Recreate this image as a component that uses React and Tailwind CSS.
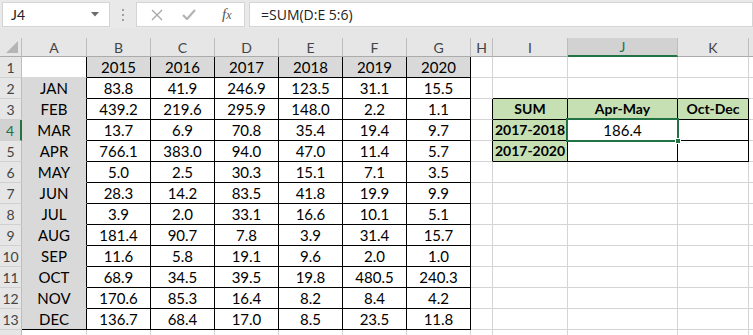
import React from 'react';

const COLS = [
  { key: 'A', w: 'w-[65px]' },
  { key: 'B', w: 'w-[64px]' },
  { key: 'C', w: 'w-[64px]' },
  { key: 'D', w: 'w-[64px]' },
  { key: 'E', w: 'w-[64px]' },
  { key: 'F', w: 'w-[64px]' },
  { key: 'G', w: 'w-[64px]' },
  { key: 'H', w: 'w-[22px]' },
  { key: 'I', w: 'w-[75px]' },
  { key: 'J', w: 'w-[110px]' },
  { key: 'K', w: 'w-[71px]' },
  { key: 'L', w: 'w-[64px]' },
];

const YEARS = ['2015', '2016', '2017', '2018', '2019', '2020'];

const DATA = [
  ['JAN', '83.8', '41.9', '246.9', '123.5', '31.1', '15.5'],
  ['FEB', '439.2', '219.6', '295.9', '148.0', '2.2', '1.1'],
  ['MAR', '13.7', '6.9', '70.8', '35.4', '19.4', '9.7'],
  ['APR', '766.1', '383.0', '94.0', '47.0', '11.4', '5.7'],
  ['MAY', '5.0', '2.5', '30.3', '15.1', '7.1', '3.5'],
  ['JUN', '28.3', '14.2', '83.5', '41.8', '19.9', '9.9'],
  ['JUL', '3.9', '2.0', '33.1', '16.6', '10.1', '5.1'],
  ['AUG', '181.4', '90.7', '7.8', '3.9', '31.4', '15.7'],
  ['SEP', '11.6', '5.8', '19.1', '9.6', '2.0', '1.0'],
  ['OCT', '68.9', '34.5', '39.5', '19.8', '480.5', '240.3'],
  ['NOV', '170.6', '85.3', '16.4', '8.2', '8.4', '4.2'],
  ['DEC', '136.7', '68.4', '17.0', '8.5', '23.5', '11.8'],
];

const SUMMARY = {
  '3-8': 'SUM',
  '3-9': 'Apr-May',
  '3-10': 'Oct-Dec',
  '4-8': '2017-2018',
  '4-9': '186.4',
  '5-8': '2017-2020',
};

const FILL = { gray: 'bg-[#d9d9d9]', green: 'bg-[#c6e0b4]', none: 'bg-white' };
const RIGHT = {
  black: 'border-r-black',
  gray: 'border-r-[#d9d9d9]',
  green: 'border-r-[#c6e0b4]',
  grid: 'border-r-[#d4d4d4]',
};
const BOTTOM = {
  black: 'border-b-black',
  gray: 'border-b-[#d9d9d9]',
  green: 'border-b-[#c6e0b4]',
  grid: 'border-b-[#d4d4d4]',
};

const bordered = (r, c) =>
  (r >= 1 && r <= 13 && c >= 1 && c <= 6) || (r >= 3 && r <= 5 && c >= 8 && c <= 10);

const fillOf = (r, c) => {
  if (r === 1 && c >= 1 && c <= 6) return 'gray';
  if (r >= 2 && r <= 13 && c === 0) return 'gray';
  if ((r === 3 && c >= 8 && c <= 10) || ((r === 4 || r === 5) && c === 8)) return 'green';
  return 'none';
};

const textOf = (r, c) => {
  if (r === 1 && c >= 1 && c <= 6) return YEARS[c - 1];
  if (r >= 2 && r <= 13 && c <= 6) return DATA[r - 2][c];
  return SUMMARY[`${r}-${c}`] || '';
};

// colour of the shared edge between two cells
const edge = (ar, ac, br, bc) => {
  if (bordered(ar, ac) || bordered(br, bc)) return 'black';
  const f = fillOf(ar, ac) !== 'none' ? fillOf(ar, ac) : fillOf(br, bc);
  return f === 'none' ? 'grid' : f;
};

const Cell = ({ r, c }) => {
  const right = edge(r, c, r, c + 1);
  const bottom = r === 13 && c === 0 ? 'black' : edge(r, c, r + 1, c);
  const fill = fillOf(r, c);
  const selected = r === 4 && c === 9;
  return (
    <div
      className={`relative flex h-[21px] shrink-0 items-center justify-center whitespace-nowrap border-r border-b ${COLS[c].w} ${RIGHT[right]} ${BOTTOM[bottom]} ${FILL[fill]} ${fill === 'green' ? 'text-[14px] font-bold' : ''}`}
    >
      <span className="leading-none">{textOf(r, c)}</span>
      {selected && (
        <div className="absolute -left-[2px] -top-[2px] z-10 h-[24px] w-[113px] border-2 border-[#217346]">
          <div className="absolute -bottom-[4px] -right-[4px] h-[6px] w-[6px] border border-white bg-[#217346]" />
        </div>
      )}
    </div>
  );
};

const FormulaBar = () => (
  <div className="flex h-[28px] items-start bg-[#e9e9e9] pl-[2px] pt-[2px]">
    <div className="flex h-[25px] w-[108px] items-center justify-between border border-[#d4d4d4] bg-white pl-[8px] pr-[10px] text-[14px] text-[#222]">
      <span>J4</span>
      <svg width="8" height="5" viewBox="0 0 8 5">
        <path d="M0 0h8L4 4.5z" fill="#6b6b6b" />
      </svg>
    </div>
    <div className="flex h-[25px] w-[26px] flex-col items-center justify-center gap-[3px]">
      <span className="h-[2px] w-[2px] bg-[#a0a0a0]" />
      <span className="h-[2px] w-[2px] bg-[#a0a0a0]" />
      <span className="h-[2px] w-[2px] bg-[#a0a0a0]" />
    </div>
    <div className="flex h-[25px] w-[109px] items-center border border-[#d4d4d4] bg-white">
      <svg className="ml-[14px]" width="12" height="12" viewBox="0 0 12 12">
        <path d="M1 1l10 10M11 1L1 11" stroke="#a6a6a6" strokeWidth="1.3" />
      </svg>
      <svg className="ml-[19px]" width="14" height="11" viewBox="0 0 14 11">
        <path d="M1 6l4 4L13 1" stroke="#b3b3b3" strokeWidth="2.2" fill="none" />
      </svg>
      <span className="ml-[26px] font-['Liberation_Serif'] text-[15px] italic text-[#555]">
        f<span className="text-[12px]">x</span>
      </span>
    </div>
    <div className="ml-[4px] flex h-[25px] flex-1 items-center border border-[#d4d4d4] bg-white pl-[11px] font-['Open_Sans'] text-[14px] text-[#222]">
      =SUM(D:E 5:6)
    </div>
  </div>
);

const ColumnHeader = () => (
  <div className="flex h-[19px] bg-[#e6e6e6] text-[14px] text-[#444]">
    <div className="relative h-[19px] w-[22px] shrink-0 border-r border-b border-r-[#bdbdbd] border-b-[#ababab]">
      <svg className="absolute bottom-[3px] right-[3px]" width="12" height="12" viewBox="0 0 12 12">
        <path d="M12 0V12H0z" fill="#b5b5b5" />
      </svg>
    </div>
    {COLS.map((col) => (
      <div
        key={col.key}
        className={`flex h-[19px] shrink-0 items-center justify-center border-r border-r-[#bdbdbd] ${col.w} ${
          col.key === 'J' ? 'border-b-2 border-b-[#217346] bg-[#d2d2d2] text-[#217346]' : 'border-b border-b-[#ababab]'
        }`}
      >
        {col.key === 'L' ? '' : col.key}
      </div>
    ))}
  </div>
);

export default function App() {
  const rows = Array.from({ length: 14 }, (_, i) => i + 1);
  return (
    <div className="h-[335px] w-[753px] overflow-hidden bg-[#e6e6e6] font-['Lato','Liberation_Sans',sans-serif]">
      <FormulaBar />
      <div className="h-[10px] bg-[#e6e6e6]" />
      <ColumnHeader />
      {rows.map((r) => (
        <div key={r} className="flex text-[15px] text-black">
          <div
            className={`flex h-[21px] w-[22px] shrink-0 items-center justify-center border-b border-b-[#d0d0d0] text-[14px] ${
              r === 4 ? 'border-r-2 border-r-[#217346] bg-[#d2d2d2] text-[#217346]' : 'border-r border-r-[#bdbdbd] bg-[#e6e6e6] text-[#444]'
            }`}
          >
            {r === 14 ? '' : r}
          </div>
          {COLS.map((col, c) => (
            <Cell key={col.key} r={r} c={c} />
          ))}
        </div>
      ))}
    </div>
  );
}
